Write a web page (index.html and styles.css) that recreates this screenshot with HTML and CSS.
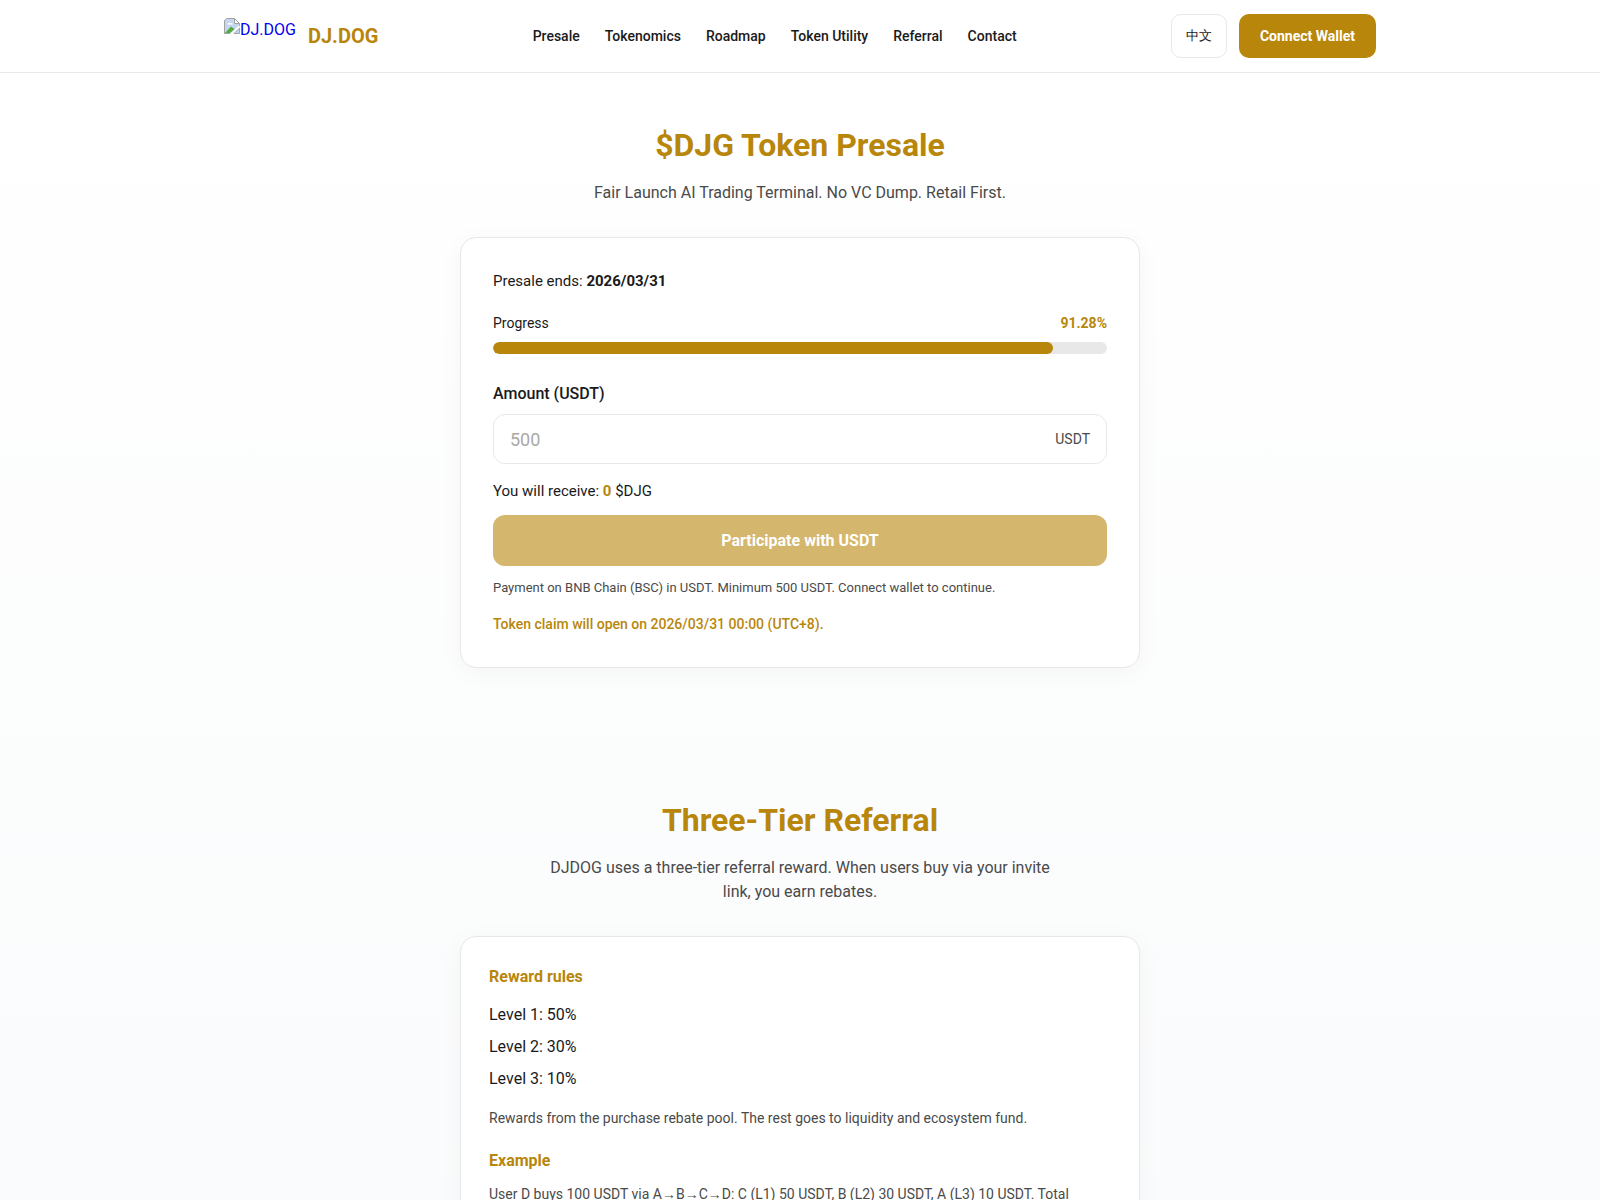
FILE: index.html
```html
<!DOCTYPE html>
<html lang="en">
<head>
    <meta charset="UTF-8">
    <meta name="viewport" content="width=device-width, initial-scale=1.0">
    <title>DJ.DOG - $DJG Token Presale</title>
    <link rel="stylesheet" href="styles.css">
</head>
<body>
    <header class="header">
        <div class="container header-inner">
            <a href="#" class="logo">
                <span class="logo-img">
                    <svg width="16" height="16" viewBox="0 0 16 16">
                        <path d="M0.5 15.5V2.5L2.5 0.5H10.5L15.5 5.5V9" fill="#c6d6f0" stroke="#a3a3a3"/>
                        <path d="M1 15.5V7H15V9L8 15.5Z" fill="#c6d6f0"/>
                        <path d="M10.5 0.5V5.5H15.5Z" fill="#fff" stroke="#a3a3a3"/>
                        <path d="M3 6.5a2 2 0 0 1 3-1.5a2 2 0 0 1 3 1.5Z" fill="#fff"/>
                        <path d="M1 15L7 8.5L10.5 11L6 15Z" fill="#53ad3b"/>
                        <path d="M0.5 8V15.5H6" fill="none" stroke="#a3a3a3"/>
                        <path d="M6 16L15.5 7V10L9.5 16Z" fill="#fff"/>
                        <path d="M10 15.5H15.5V10Z" fill="#c6d6f0" stroke="#a3a3a3"/>
                    </svg>
                    <span>DJ.DOG</span>
                </span>
                <span class="logo-text">DJ.DOG</span>
            </a>
            <nav class="nav">
                <a href="#presale">Presale</a>
                <a href="#tokenomics">Tokenomics</a>
                <a href="#roadmap">Roadmap</a>
                <a href="#utility">Token Utility</a>
                <a href="#referral">Referral</a>
                <a href="#contact">Contact</a>
            </nav>
            <div class="header-actions">
                <button type="button" class="btn-lang">中文</button>
                <button type="button" class="btn-wallet">Connect Wallet</button>
            </div>
        </div>
    </header>

    <main>
        <section class="section" id="presale">
            <h1 class="section-title">$DJG Token Presale</h1>
            <p class="section-desc">Fair Launch AI Trading Terminal. No VC Dump. Retail First.</p>
            <div class="card presale-card">
                <p class="presale-ends">Presale ends: <strong>2026/03/31</strong></p>
                <div class="progress-head">
                    <span>Progress</span>
                    <span class="progress-value">91.28%</span>
                </div>
                <div class="progress-bar">
                    <div class="progress-fill" style="width: 91.28%"></div>
                </div>
                <label class="amount-label" for="amount">Amount (USDT)</label>
                <div class="amount-box">
                    <input type="text" id="amount" inputmode="decimal" placeholder="500">
                    <span class="amount-unit">USDT</span>
                </div>
                <p class="receive">You will receive: <strong>0</strong> $DJG</p>
                <button type="button" class="btn-buy" disabled>Participate with USDT</button>
                <p class="hint">Payment on BNB Chain (BSC) in USDT. Minimum 500 USDT. Connect wallet to continue.</p>
                <p class="claim">Token claim will open on 2026/03/31 00:00 (UTC+8).</p>
            </div>
        </section>

        <section class="section section-referral" id="referral">
            <h2 class="section-title">Three-Tier Referral</h2>
            <p class="section-desc">DJDOG uses a three-tier referral reward. When users buy via your invite link, you earn rebates.</p>
            <div class="card referral-card">
                <h3>Reward rules</h3>
                <ul class="levels">
                    <li>Level 1: 50%</li>
                    <li>Level 2: 30%</li>
                    <li>Level 3: 10%</li>
                </ul>
                <p class="rules-note">Rewards from the purchase rebate pool. The rest goes to liquidity and ecosystem fund.</p>
                <h3>Example</h3>
                <p class="example">User D buys 100 USDT via A→B→C→D: C (L1) 50 USDT, B (L2) 30 USDT, A (L3) 10 USDT. Total</p>
            </div>
        </section>
    </main>
</body>
</html>
```
FILE: styles.css
```css
:root {
    --gold: #b8860b;
    --text: #1a1a1a;
    --muted: #4a4a4a;
    --border: #e8e8e8;
}
* {
    box-sizing: border-box;
    margin: 0;
    padding: 0;
}
body {
    font-family: Roboto, "Liberation Sans", sans-serif;
    font-size: 16px;
    line-height: 1.5;
    color: var(--text);
    background: linear-gradient(to bottom, #fff, #fafbfc);
    min-height: 100vh;
}
.container {
    max-width: 1200px;
    margin: 0 auto;
    padding: 0 24px;
}
.header {
    background: #fff;
    border-bottom: 1px solid var(--border);
    padding: 14px 0;
}
.header-inner {
    display: flex;
    align-items: center;
    justify-content: space-between;
}
.logo {
    display: flex;
    align-items: center;
    gap: 12px;
    text-decoration: none;
    color: #0000ee;
}
.logo-img {
    display: flex;
    height: 36px;
}
.logo-img svg {
    display: block;
}
.logo-text {
    font-size: 20px;
    font-weight: 700;
    color: var(--gold);
}
.nav {
    display: flex;
    gap: 25px;
}
.nav a {
    color: var(--text);
    font-size: 14px;
    font-weight: 500;
    line-height: 22px;
    text-decoration: none;
}
.header-actions {
    display: flex;
    gap: 12px;
}
button {
    font-family: inherit;
    cursor: pointer;
}
.btn-lang {
    padding: 0 14px;
    font-size: 13px;
    color: var(--text);
    background: #fff;
    border: 1px solid var(--border);
    border-radius: 10px;
}
.btn-wallet {
    height: 44px;
    padding: 0 21px;
    font-size: 14px;
    font-weight: 700;
    color: #fff;
    background: var(--gold);
    border: none;
    border-radius: 10px;
}
.section {
    padding: 48px 24px;
}
.section-referral {
    padding-top: 80px;
}
.section-title {
    font-size: 32px;
    font-weight: 700;
    text-align: center;
    color: var(--gold);
    margin-bottom: 12px;
}
.section-desc {
    max-width: 520px;
    margin: 0 auto 32px;
    text-align: center;
    color: var(--muted);
}
.card {
    max-width: 680px;
    margin: 0 auto;
    background: #fff;
    border: 1px solid var(--border);
    border-radius: 16px;
    box-shadow: 0 4px 24px rgba(0, 0, 0, 0.04);
}
.presale-card {
    padding: 32px;
}
.presale-ends {
    font-size: 15px;
    line-height: 23px;
    margin-bottom: 20px;
}
.progress-head {
    display: flex;
    justify-content: space-between;
    font-size: 14px;
    margin-bottom: 8px;
}
.progress-value {
    font-weight: 700;
    color: var(--gold);
}
.progress-bar {
    height: 12px;
    background: var(--border);
    border-radius: 6px;
    overflow: hidden;
    margin-bottom: 28px;
}
.progress-fill {
    height: 100%;
    background: var(--gold);
    border-radius: 6px;
}
.amount-label {
    display: block;
    font-weight: 500;
    margin-bottom: 8px;
}
.amount-box {
    display: flex;
    align-items: center;
    height: 50px;
    padding: 0 16px;
    border: 1px solid var(--border);
    border-radius: 12px;
    margin-bottom: 16px;
}
.amount-box input {
    flex: 1;
    min-width: 0;
    border: none;
    outline: none;
    background: none;
    font-family: inherit;
    font-size: 18px;
    color: var(--text);
}
.amount-box input::placeholder {
    color: #a9a9a9;
}
.amount-unit {
    font-size: 14px;
    line-height: 22px;
    color: var(--muted);
}
.receive {
    font-size: 15px;
    line-height: 23px;
    margin-bottom: 12px;
}
.receive strong {
    color: var(--gold);
}
.btn-buy {
    display: block;
    width: 100%;
    padding: 16px;
    font-size: 16px;
    font-weight: 700;
    color: #fff;
    background: var(--gold);
    border: none;
    border-radius: 12px;
}
.btn-buy:disabled {
    opacity: 0.6;
    cursor: not-allowed;
}
.hint {
    font-size: 13px;
    line-height: 19px;
    color: var(--muted);
    margin-top: 12px;
}
.claim {
    font-size: 14px;
    line-height: 22px;
    font-weight: 500;
    color: var(--gold);
    margin-top: 16px;
}
.referral-card {
    padding: 28px;
}
.referral-card h3 {
    font-size: 16px;
    font-weight: 700;
    color: var(--gold);
    margin-bottom: 10px;
}
.levels {
    list-style: none;
    margin: 14px 0 16px;
}
.levels li {
    margin-bottom: 8px;
}
.rules-note {
    font-size: 14px;
    line-height: 22px;
    color: var(--muted);
    margin-bottom: 20px;
}
.example {
    font-size: 14px;
    line-height: 22px;
    color: var(--muted);
}
```
